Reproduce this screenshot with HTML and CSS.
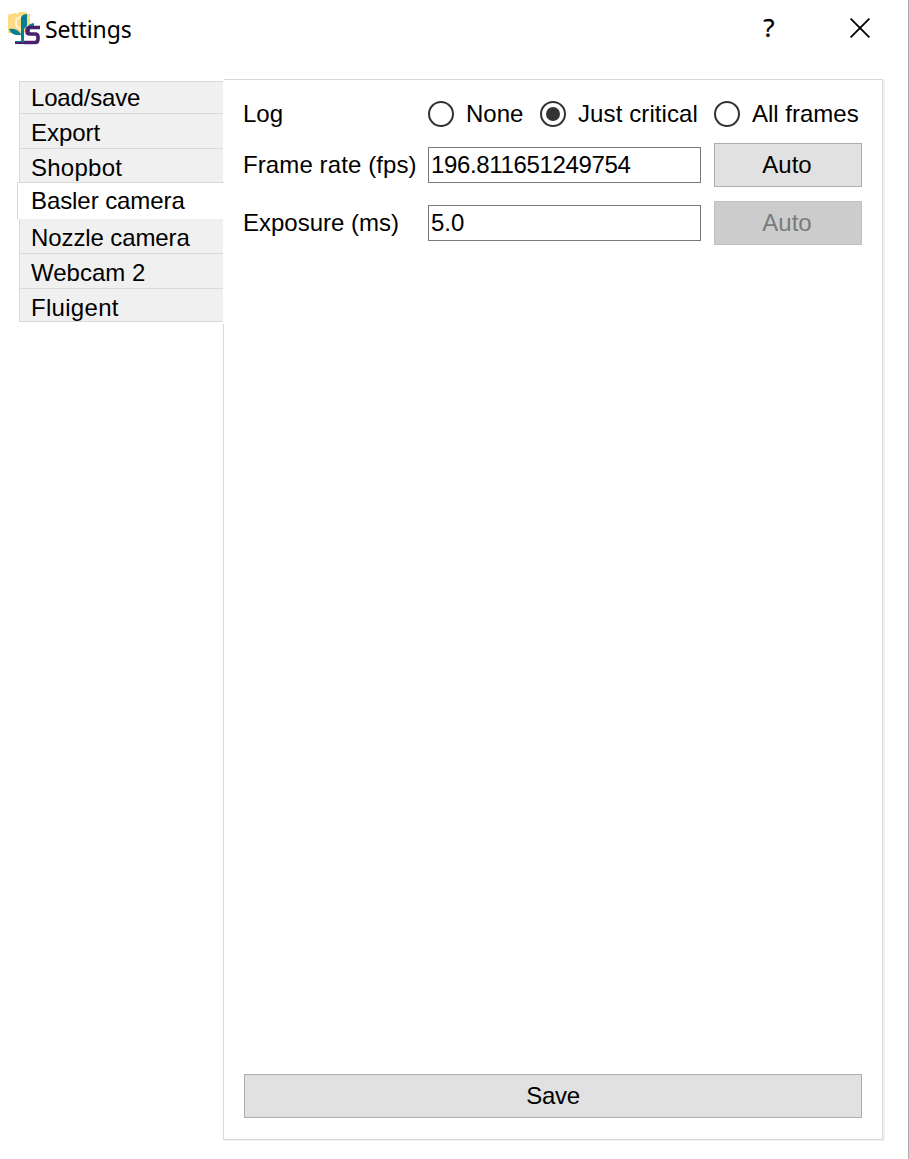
FILE: index.html
```html
<!DOCTYPE html>
<html lang="en">
<head>
<meta charset="utf-8">
<title>Settings</title>
<link rel="stylesheet" href="styles.css">
</head>
<body>
<div class="window">
  <header class="titlebar">
    <svg class="logo" viewBox="0 0 32 33" width="32" height="33">
      <path fill="#fddb83" d="M0 4q0-2 2-2h3l1-1h2l1 1 2-2h7l2 2h2v11l-6 8H0z"/>
      <path fill="none" stroke="#fff6dc" stroke-width="1.8" d="M13 17q-5-1-5-6 0-6 6-6"/>
      <path fill="#fff" d="M17 13h15v20H17z"/>
      <path fill="#087f91" d="M13 5q2-3 6-3v12h-3v16h-3v-7h-3Q3 23 1 17q8-1 12 5z"/>
      <path fill="#087f91" d="M13 8h6v6l-3 3v12h-3z"/>
      <path fill="#087f91" d="M19 21v-4q0-5 7-6v3q-4 1-4 5v2zM7 29h9v3H7z"/>
      <path fill="none" stroke="#48206d" stroke-width="3.6" d="M32 15.5H22q-3 0-3 3v1q0 2.5 3 2.5h5q3 0 3 3v2q0 3.5-3 3.5H16"/>
      <path fill="#48206d" d="M7 30h10v2H7z"/>
    </svg>
    <h1 class="title">Settings</h1>
    <button class="caption help" aria-label="Help">?</button>
    <button class="caption close" aria-label="Close">
      <svg viewBox="0 0 20 20" width="20" height="20"><path d="M.6.6l18.8 18.8M19.4.6L.6 19.4" fill="none" stroke="#000" stroke-width="1.8"/></svg>
    </button>
  </header>
  <main class="content">
    <nav class="tabs">
      <div class="tab first">Load/save</div>
      <div class="tab export">Export</div>
      <div class="tab before">Shopbot</div>
      <div class="tab active">Basler camera</div>
      <div class="tab after">Nozzle camera</div>
      <div class="tab">Webcam 2</div>
      <div class="tab last">Fluigent</div>
      <div class="rail"></div>
    </nav>
    <section class="panel">
      <div class="form">
        <div class="row log">
          <span class="label">Log</span>
          <label class="option none"><i class="radio"></i><span>None</span></label>
          <label class="option critical"><i class="radio checked"></i><span>Just critical</span></label>
          <label class="option all"><i class="radio"></i><span>All frames</span></label>
        </div>
        <div class="row">
          <span class="label rate">Frame rate (fps)</span>
          <div class="field number">196.811651249754</div>
          <button class="button">Auto</button>
        </div>
        <div class="row">
          <span class="label">Exposure (ms)</span>
          <div class="field">5.0</div>
          <button class="button disabled" disabled>Auto</button>
        </div>
      </div>
      <button class="button save">Save</button>
    </section>
  </main>
</div>
</body>
</html>
```
FILE: styles.css
```css
* { box-sizing: border-box; }
body { margin: 0; background: #fff; }
.window {
  width: 909px;
  height: 1159px;
  border-right: 1px solid #adadad;
  font: 24px/28px "Liberation Sans", Arial, sans-serif;
  color: #000;
  white-space: nowrap;
}
.titlebar {
  display: flex;
  align-items: flex-start;
  height: 79px;
  padding: 12px 38px 0 8px;
}
.title {
  margin: 0 0 0 5px;
  font: 400 23px/34px "Noto Sans", "Open Sans", sans-serif;
  letter-spacing: -.12px;
}
.caption { padding: 0; border: 0; background: none; color: #000; }
.help {
  margin: -2px 0 0 auto;
  width: 14px;
  font: 26px/34px "Noto Sans", sans-serif;
  -webkit-text-stroke: .3px #000;
}
.close { width: 20px; height: 20px; margin: 6px 0 0 74px; }
.close svg { display: block; }
.content { display: flex; height: 1061px; }
.tabs {
  display: flex;
  flex-direction: column;
  width: 224px;
  padding: 2px 0 0 17px;
}
.tab {
  height: 35px;
  margin: 0 1px 0 2px;
  padding: 5px 0 0 11px;
  border: solid #d9d9d9;
  border-width: 1px 0 0 1px;
  background: #f0f0f0;
}
.tab.first { height: 32px; padding-top: 2px; letter-spacing: -.18px; }
.tab.export { letter-spacing: -.05px; }
.tab.before { height: 34px; letter-spacing: .25px; }
.tab.active {
  height: 37px;
  margin: 0;
  padding: 4px 0 0 13px;
  background: #fff;
  letter-spacing: -.08px;
}
.tab.after {
  height: 34px;
  padding-top: 4px;
  border-top-color: #f0f0f0;
  letter-spacing: -.1px;
}
.tab.last { height: 34px; border-bottom-width: 1px; letter-spacing: .3px; }
.rail { flex: 1; margin-top: 2px; border-right: 1px solid #d9d9d9; }
.panel {
  display: flex;
  flex-direction: column;
  justify-content: space-between;
  width: 660px;
  height: 1061px;
  margin-left: -1px;
  padding: 17px 20px 21px 21px;
  border: solid #d9d9d9;
  border-width: 1px 1px 1px 0;
  box-shadow: 1px 1px #f0f0f0, 2px 1px #f0f0f0;
  clip-path: inset(0 -2px -1px 1px);
}
.form { display: flex; flex-direction: column; gap: 14px; }
.row {
  display: grid;
  grid-template-columns: 184px 273px 148px;
  align-items: center;
  height: 44px;
}
.row .button { margin-left: 13px; padding-right: 2px; }
.row.log { display: flex; height: 34px; margin-bottom: -2px; }
.label { margin-left: -1px; }
.label.rate { letter-spacing: .1px; }
.log .label { width: 185px; }
.option { display: flex; align-items: center; gap: 12px; }
.option.none { width: 112px; }
.option.critical { width: 174px; letter-spacing: .1px; }
.radio {
  display: flex;
  flex: none;
  width: 26px;
  height: 26px;
  border: 2px solid #333;
  border-radius: 50%;
}
.radio.checked::after {
  content: "";
  width: 14px;
  height: 14px;
  margin: auto;
  border-radius: 50%;
  background: #333;
}
.field {
  height: 36px;
  padding: 3px 2px;
  border: 1px solid #7a7a7a;
  background: #fff;
}
.field.number { letter-spacing: -.35px; }
.button {
  width: 148px;
  height: 44px;
  padding: 0 0 1px;
  border: 1px solid #adadad;
  background: #e1e1e1;
  color: #000;
  font: inherit;
}
.button.disabled { border-color: #bfbfbf; background: #ccc; color: #7b7b7b; }
.button.save { width: 618px; letter-spacing: -.3px; }
```
